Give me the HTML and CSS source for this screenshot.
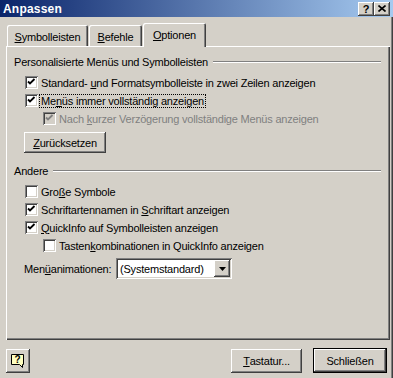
FILE: index.html
```html
<!DOCTYPE html>
<html>
<head>
	<meta charset="utf-8">
	<title>Anpassen</title>
	<link rel="stylesheet" href="styles.css">
</head>
<body>
	<div class="window">
		<div class="titlebar">
			<span class="title">Anpassen</span>
			<span class="caption-btns">
				<span class="cbtn">?</span>
				<span class="cbtn">
					<svg width="8" height="7" viewBox="0 0 8 7"><path d="M0.5 0.5 L7.5 6.5 M7.5 0.5 L0.5 6.5" stroke="#000" stroke-width="1.6"/></svg>
				</span>
			</span>
		</div>

		<div class="tabs">
			<div class="tab tab-sym"><u>S</u>ymbolleisten</div>
			<div class="tab tab-bef"><u>B</u>efehle</div>
			<div class="tab tab-opt active"><u>O</u>ptionen</div>
		</div>

		<div class="panel">
			<div class="group-head"><span>Personalisierte Menüs und Symbolleisten</span><i class="rule"></i></div>
			<div class="opt first">
				<span class="box"><svg width="13" height="13" viewBox="0 0 13 13"><path d="M3 5.5 L5 7.5 L9.5 3" stroke="#000" stroke-width="1.8" fill="none"/></svg></span>
				<span>Standard- <u>u</u>nd Formatsymbolleiste in zwei Zeilen anzeigen</span>
			</div>
			<div class="opt">
				<span class="box"><svg width="13" height="13" viewBox="0 0 13 13"><path d="M3 5.5 L5 7.5 L9.5 3" stroke="#000" stroke-width="1.8" fill="none"/></svg></span>
				<span class="focus">Me<u>n</u>üs immer vollständig anzeigen</span>
			</div>
			<div class="opt sub disabled">
				<span class="box"><svg width="13" height="13" viewBox="0 0 13 13"><path d="M3 5.5 L5 7.5 L9.5 3" stroke="#808080" stroke-width="1.8" fill="none"/></svg></span>
				<span>Nach <u>k</u>urzer Verzögerung vollständige Menüs anzeigen</span>
			</div>
			<div class="btn reset"><u>Z</u>urücksetzen</div>

			<div class="group-head second"><span>Andere</span><i class="rule"></i></div>
			<div class="opt first">
				<span class="box"></span>
				<span>Gro<u>ß</u>e Symbole</span>
			</div>
			<div class="opt">
				<span class="box"><svg width="13" height="13" viewBox="0 0 13 13"><path d="M3 5.5 L5 7.5 L9.5 3" stroke="#000" stroke-width="1.8" fill="none"/></svg></span>
				<span>Schriftartennamen in <u>S</u>chriftart anzeigen</span>
			</div>
			<div class="opt">
				<span class="box"><svg width="13" height="13" viewBox="0 0 13 13"><path d="M3 5.5 L5 7.5 L9.5 3" stroke="#000" stroke-width="1.8" fill="none"/></svg></span>
				<span><u>Q</u>uickInfo auf Symbolleisten anzeigen</span>
			</div>
			<div class="opt sub">
				<span class="box"></span>
				<span>Tasten<u>k</u>ombinationen in QuickInfo anzeigen</span>
			</div>
			<div class="anim-row">
				<span class="anim-label">Men<u>ü</u>animationen:</span>
				<div class="select">
					<span class="select-text">(Systemstandard)</span>
					<span class="select-arrow"><svg width="7" height="4" viewBox="0 0 7 4"><path d="M0 0 H7 L3.5 4 Z" fill="#000"/></svg></span>
				</div>
			</div>
		</div>

		<div class="footer">
			<div class="btn help">
				<svg width="16" height="16" viewBox="0 0 16 16">
					<path d="M1.5 1.5 H13.5 V11.5 H12.5 V14.5 L9.5 11.5 H1.5 Z" fill="#ffffc0" stroke="#000"/>
					<text x="7.5" y="10" font-family="Liberation Sans, Arial, sans-serif" font-size="10" font-weight="bold" text-anchor="middle" fill="#000">?</text>
				</svg>
			</div>
			<div class="spacer"></div>
			<div class="btn keys"><u>T</u>astatur...</div>
			<div class="btn close">Schließen</div>
		</div>
	</div>
</body>
</html>
```

FILE: styles.css
```css
*{
	margin: 0;
	padding: 0;
	box-sizing: border-box;
}
body{
	background: #d4d0c8;
	font-family: "Liberation Sans", Arial, sans-serif;
	font-size: 11px;
	letter-spacing: -0.2px;
	color: #000;
}
u{
	text-decoration: underline;
	text-underline-offset: 1px;
}
.window{
	width: 393px;
	height: 378px;
	background: #d4d0c8;
	box-shadow: inset -1px 0 #404040, inset -2px 0 #808080;
	overflow: hidden;
}
.titlebar{
	height: 17px;
	display: flex;
	align-items: center;
	justify-content: space-between;
	padding: 0 3px 0 3px;
	background: linear-gradient(to right, #0a246a, #a6caf0);
}
.title{
	color: #fff;
	font-weight: bold;
	font-size: 12px;
	letter-spacing: 0.2px;
}
.caption-btns{
	display: flex;
}
.cbtn{
	width: 16px;
	height: 14px;
	display: flex;
	align-items: center;
	justify-content: center;
	background: #d4d0c8;
	font-weight: bold;
	font-size: 11px;
	box-shadow: inset -1px -1px #404040, inset 1px 1px #fff, inset -2px -2px #808080;
}

/* tabs */
.tabs{
	display: flex;
	align-items: flex-end;
	height: 23px;
	margin-top: 6px;
	padding-left: 7px;
}
.tab{
	height: 21px;
	display: flex;
	align-items: center;
	justify-content: center;
	padding-top: 2px;
	border-radius: 2px 2px 0 0;
	box-shadow: inset 1px 1px #fff, inset -1px 0 #404040, inset -2px 0 #808080;
}
.tab-sym{
	width: 81px;
}
.tab-bef{
	width: 53px;
	margin-left: 1px;
}
.tab-opt{
	width: 63px;
	margin-left: 1px;
}
.tab.active{
	height: 24px;
	margin-bottom: -1px;
	padding-top: 0;
	position: relative;
	z-index: 1;
	background: #d4d0c8;
}

/* panel */
.panel{
	height: 294px;
	margin: 0 3px 0 6px;
	padding: 9px 9px 0 8px;
	box-shadow: inset 1px 1px #fff, inset -1px -1px #404040, inset -2px -2px #808080;
}
.group-head{
	height: 13px;
	display: flex;
	align-items: center;
	gap: 5px;
}
.group-head.second{
	margin-top: 11px;
}
.rule{
	flex: 1;
	height: 2px;
	border-top: 1px solid #808080;
	border-bottom: 1px solid #fff;
}
.opt{
	height: 13px;
	display: flex;
	align-items: center;
	gap: 3px;
	margin-top: 5px;
	padding-left: 11px;
}
.opt.first{
	margin-top: 8px;
}
.opt.sub{
	padding-left: 29px;
}
.box{
	width: 13px;
	height: 13px;
	flex: none;
	background: #fff;
	box-shadow: inset 1px 1px #808080, inset -1px -1px #fff, inset 2px 2px #404040, inset -2px -2px #d4d0c8;
}
.box svg{
	display: block;
}
.disabled{
	color: #808080;
}
.disabled .box{
	background: #d4d0c8;
}
.focus{
	outline: 1px dotted #000;
	padding: 0 1px;
	margin-left: -1px;
}

/* buttons */
.btn{
	display: flex;
	align-items: center;
	justify-content: center;
	background: #d4d0c8;
	box-shadow: inset -1px -1px #404040, inset 1px 1px #fff, inset -2px -2px #808080;
}
.reset{
	width: 82px;
	height: 21px;
	margin: 7px 0 0 10px;
}

/* menu animation row */
.anim-row{
	height: 21px;
	display: flex;
	align-items: center;
	margin-top: 6px;
	padding-left: 10px;
}
.anim-label{
	width: 92px;
}
.select{
	width: 116px;
	height: 21px;
	display: flex;
	align-items: center;
	padding: 2px;
	background: #fff;
	box-shadow: inset 1px 1px #808080, inset -1px -1px #fff, inset 2px 2px #404040, inset -2px -2px #d4d0c8;
}
.select-text{
	flex: 1;
	padding-left: 2px;
}
.select-arrow{
	width: 16px;
	height: 17px;
	display: flex;
	align-items: center;
	justify-content: center;
	background: #d4d0c8;
	box-shadow: inset -1px -1px #404040, inset 1px 1px #fff, inset -2px -2px #808080;
}

/* footer */
.footer{
	display: flex;
	align-items: center;
	margin-top: 8px;
	padding: 0 6px;
}
.help{
	width: 24px;
	height: 24px;
}
.spacer{
	flex: 1;
}
.keys{
	width: 71px;
	height: 24px;
	margin-right: 11px;
}
.close{
	width: 74px;
	height: 25px;
	border: 1px solid #000;
}
```
